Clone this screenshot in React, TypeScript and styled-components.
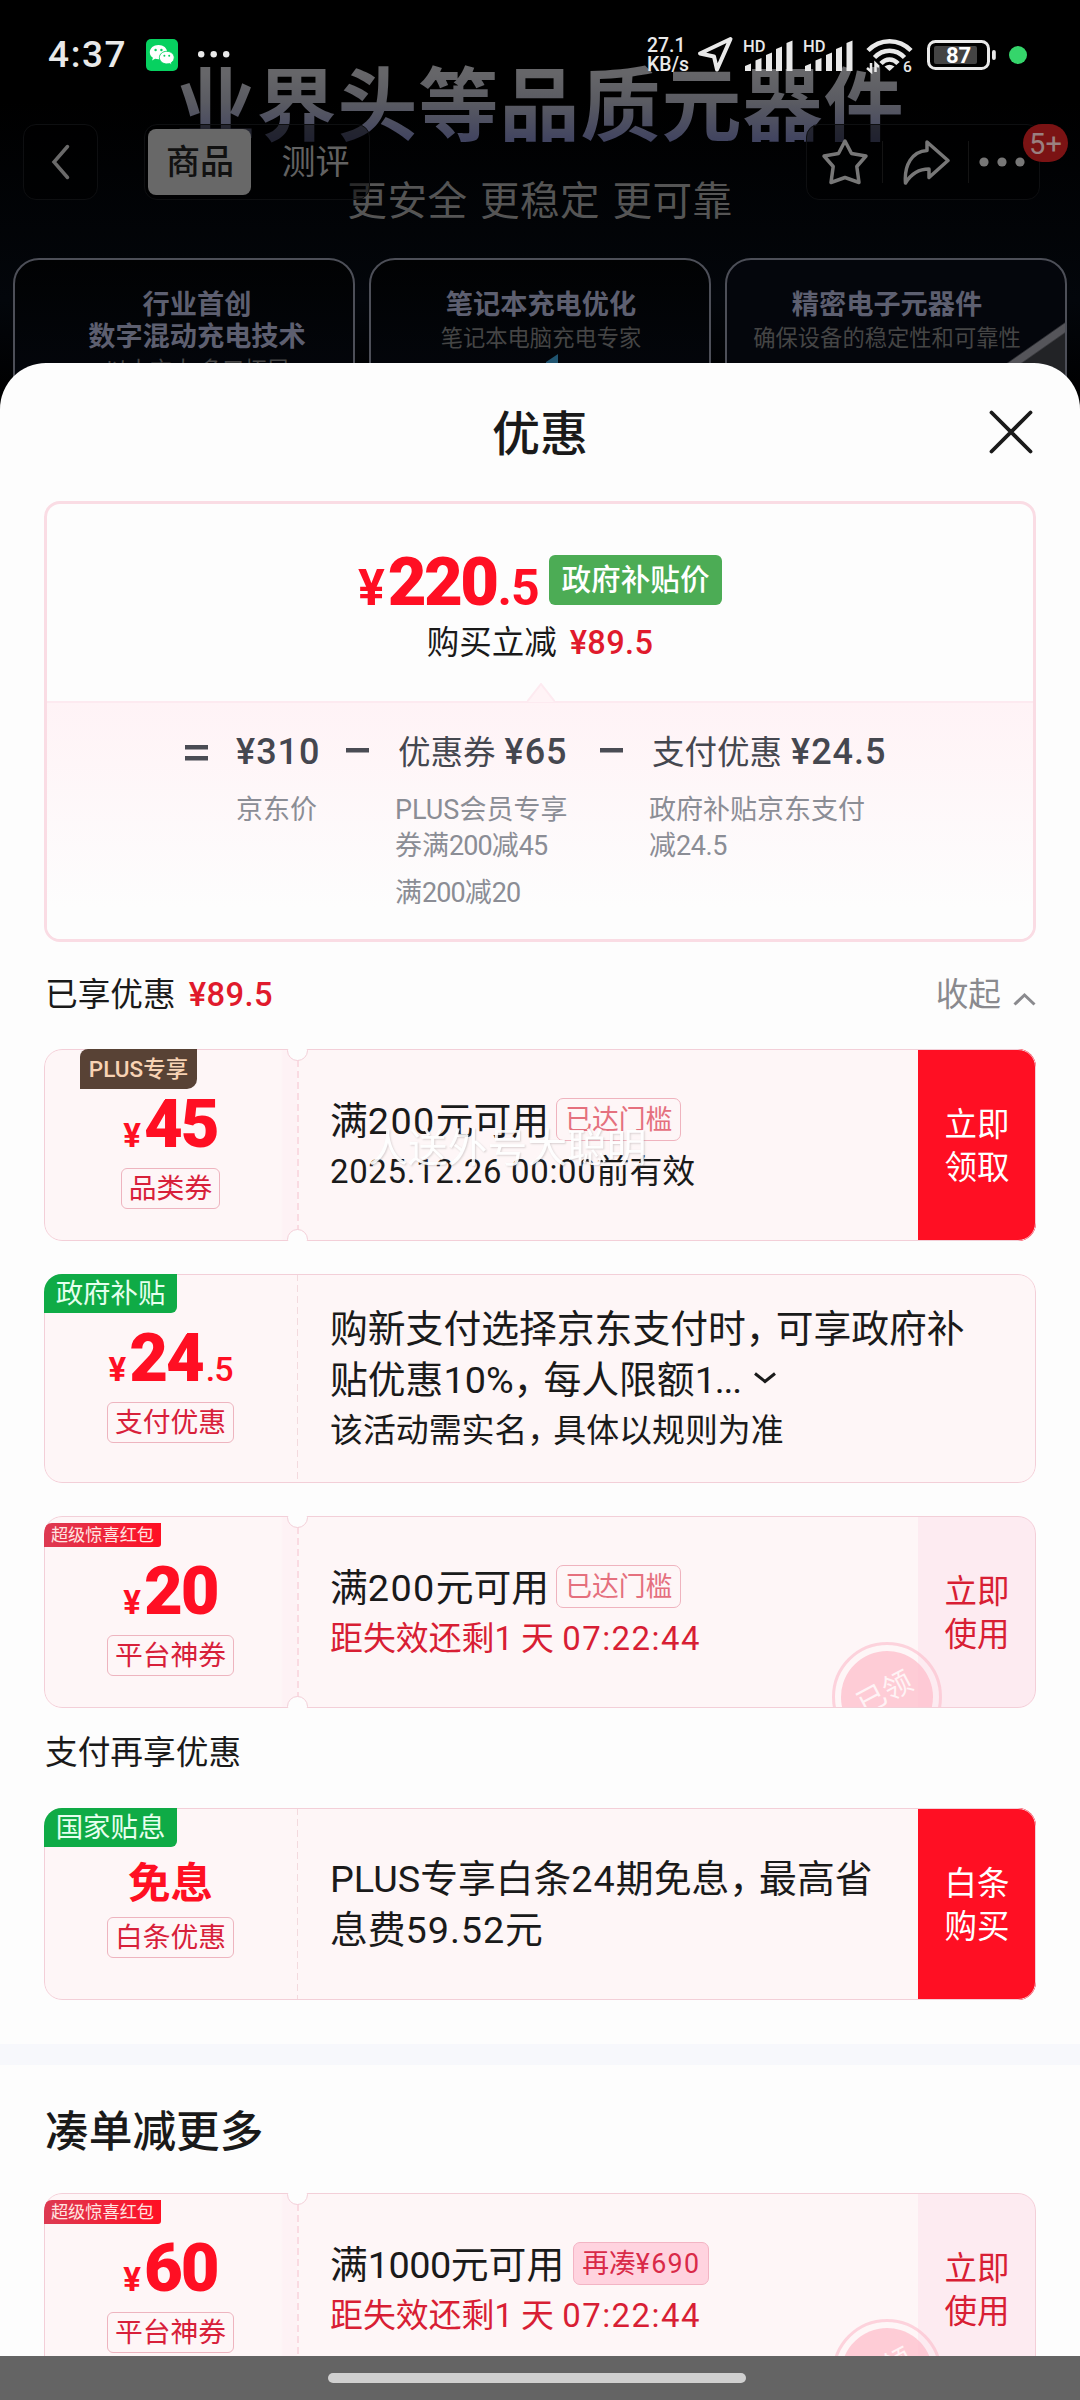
import React from "react";
import styled, { createGlobalStyle, css } from "styled-components";

const GlobalStyle = createGlobalStyle`
  * { box-sizing: border-box; }
  body {
    margin: 0;
    background: #000;
    font-family: Roboto, "Noto Sans CJK SC", sans-serif;
    color: #1a1a1a;
  }
`;

const Screen = styled.div`
  position: relative;
  width: 1080px;
  height: 2400px;
  overflow: hidden;
  background: linear-gradient(#000 0, #000 100px, #03060b 300px, #000 400px);
`;

/* Latin runs are set slightly looser or tighter than the Chinese text round them. */
const Num = styled.span<{ $ls: number }>`
  letter-spacing: ${(p) => p.$ls}px;
`;

/* Full-width comma with its trailing blank trimmed. */
const Comma = styled.span`
  letter-spacing: -0.21em;
`;

/* ---------- product poster behind the sheet ---------- */

const Poster = styled.div`
  position: absolute;
  inset: 0 0 auto 0;
  height: 420px;
  display: flex;
  flex-direction: column;
  align-items: center;
  padding-top: 59px;
`;

const PosterTitle = styled.div`
  font-size: 80px;
  line-height: 96px;
  letter-spacing: 1px;
  font-weight: 700;
  color: transparent;
  background: linear-gradient(#666669 15%, #5a5b62 45%, #3f4260 88%);
  background-clip: text;
  -webkit-background-clip: text;
`;

const PosterSub = styled.div`
  margin-top: 22px;
  font-size: 39.6px;
  line-height: 50px;
  letter-spacing: 0.5px;
  word-spacing: 2px;
  color: #555;
`;

const PosterCards = styled.div`
  display: flex;
  gap: 14px;
  margin-top: 31px;
`;

const PosterCard = styled.div<{ $shift?: number; $shine?: boolean }>`
  width: 342px;
  height: 160px;
  padding-top: 29px;
  border: 2px solid #4d4f58;
  border-radius: 26px;
  text-align: center;
  text-indent: ${(p) => (p.$shift ?? 0) * 2}px;
  white-space: nowrap;
  background: ${(p) =>
    p.$shine
      ? "linear-gradient(145deg, transparent 76%, #55555a 76.5%, #55555a 78.5%, #222326 79%), #04060c"
      : "linear-gradient(#010203, #04070e)"};
`;

const PosterCardTitle = styled.div`
  font-size: 27.2px;
  line-height: 32px;
  font-weight: 600;
  color: #5d5f70;
`;

const PosterCardNote = styled.div`
  font-size: 22.3px;
  line-height: 36px;
  margin-top: -1px;
  color: #454545;
`;

const CardGlint = styled.svg`
  display: inline-block;
  margin: -2px 0 0 24px;
`;

/* ---------- status bar and page navigation ---------- */

const Header = styled.header`
  position: relative;
  height: 363px;
`;

const StatusBar = styled.div`
  height: 108px;
  padding: 1px 53px 0 48px;
  display: flex;
  align-items: center;
  color: #e9e9e9;
`;

const Clock = styled.div`
  width: 98px;
  font-size: 37px;
  line-height: 40px;
  font-weight: 500;
  letter-spacing: 1.6px;
`;

const MoreDots = styled.svg`
  margin-left: 19px;
`;

const StatusIcons = styled.div`
  margin-left: auto;
  display: grid;
  grid-template-columns: 50px 46px 60px 63px 61px 82px 18px;
  align-items: center;
  svg {
    overflow: visible;
  }
`;

const Speed = styled.div`
  font-size: 19.4px;
  line-height: 19px;
  font-weight: 500;
`;

const CameraDot = styled.div`
  width: 18px;
  height: 18px;
  border-radius: 50%;
  background: #35d56b;
`;

const NavBar = styled.nav`
  display: flex;
  align-items: center;
  height: 76px;
  margin-top: 16px;
  padding: 0 40px 0 23px;
`;

const glass = css`
  height: 76px;
  border: 1px solid #0e0f11;
  border-radius: 13px;
  background: rgba(0, 0, 0, 0.5);
  display: flex;
  align-items: center;
`;

const BackButton = styled.div`
  ${glass}
  width: 75px;
  justify-content: center;
`;

const NavTabs = styled.div`
  ${glass}
  width: 226px;
  margin-left: 46px;
  padding-left: 3px;
`;

const NavTab = styled.div<{ $active?: boolean }>`
  width: ${(p) => (p.$active ? 103 : 118)}px;
  height: 66px;
  padding-left: ${(p) => (p.$active ? 1 : 11)}px;
  line-height: 67px;
  border-radius: 8px;
  text-align: center;
  font-size: 34px;
  font-weight: ${(p) => (p.$active ? 500 : 400)};
  color: ${(p) => (p.$active ? "#111" : "#626262")};
  background: ${(p) => (p.$active ? "#686868" : "transparent")};
`;

const NavActions = styled.div`
  ${glass}
  position: relative;
  width: 234px;
  margin-left: auto;
`;

const NavAction = styled.div<{ $w: number }>`
  width: ${(p) => p.$w}px;
  height: 42px;
  display: flex;
  align-items: center;
  justify-content: center;
  & + & {
    border-left: 1px solid #141414;
  }
`;

const CountBadge = styled.div`
  position: absolute;
  right: -29px;
  top: -1px;
  width: 45px;
  height: 38px;
  border-radius: 19px;
  background: #7b1314;
  color: #9a8080;
  font-size: 29px;
  line-height: 40px;
  text-align: center;
`;

/* ---------- bottom sheet ---------- */

const Sheet = styled.main`
  position: relative;
  height: 2037px;
  padding: 0 44px;
  border-radius: 46px 46px 0 0;
  background: #fdfdfd;
  overflow: hidden;
`;

const SheetHeader = styled.div`
  height: 138px;
  display: grid;
  grid-template-columns: 1fr auto 1fr;
  align-items: center;
`;

const SheetTitle = styled.h1`
  grid-column: 2;
  margin: 0;
  padding-top: 5px;
  font-size: 48px;
  line-height: 56px;
  font-weight: 500;
`;

const CloseIcon = styled.svg`
  justify-self: end;
  margin-right: 3px;
`;

const Summary = styled.section`
  height: 441px;
  border: 3px solid #fadce4;
  border-radius: 16px;
  overflow: hidden;
`;

const SummaryTop = styled.div`
  position: relative;
  height: 199px;
  padding-top: 51px;
  display: flex;
  flex-direction: column;
  align-items: center;
  border-bottom: 2px solid #fdeaf0;
`;

const Pointer = styled.svg`
  position: absolute;
  left: 480px;
  bottom: -2px;
`;

const FinalPriceRow = styled.div`
  display: flex;
  align-items: flex-end;
  height: 50px;
`;

const FinalPrice = styled.div`
  display: flex;
  align-items: baseline;
  width: 191px;
  height: 47px;
  line-height: 48px;
  font-weight: 700;
  font-size: 50px;
  letter-spacing: -1px;
  color: #ff0f23;
  b {
    margin: 0 1px 0 4px;
    font-size: 67px;
    letter-spacing: -2.6px;
  }
`;

const PriceBadge = styled.div`
  width: 173px;
  height: 50px;
  line-height: 51px;
  border-radius: 6px;
  background: #4cac55;
  color: #fff;
  font-size: 29.6px;
  font-weight: 500;
  text-align: center;
`;

const Amount = styled.span`
  color: #e01a2c;
  font-weight: 500;
  letter-spacing: 0.4px;
  margin-left: 13px;
`;

const SavingRow = styled.div`
  margin-top: 16px;
  font-size: 32.5px;
  line-height: 44px;
`;

const Equation = styled.div`
  display: flex;
  align-items: flex-start;
  height: 240px;
  padding: 27px 0 0 138px;
  background: linear-gradient(#fff3f6, #fdfdfd 85%);
`;

const Operator = styled.div<{ $w: number }>`
  width: ${(p) => p.$w}px;
  height: 44px;
  display: flex;
  align-items: center;
`;

const Term = styled.div<{ $w: number }>`
  width: ${(p) => p.$w}px;
`;

const TermHead = styled.div`
  font-size: 32.5px;
  line-height: 44px;
  color: #45474f;
  white-space: nowrap;
  span {
    font-size: 36px;
    font-weight: 500;
    letter-spacing: 1px;
  }
  em {
    font-style: normal;
    margin-right: 9px;
  }
`;

const TermNote = styled.div<{ $flush?: boolean }>`
  margin: 17px 0 0 ${(p) => (p.$flush ? 0 : -3)}px;
  font-size: 27px;
  line-height: 36px;
  color: #8b8d95;
  white-space: nowrap;
  & + & {
    margin-top: 11px;
  }
`;

const SectionRow = styled.div<{ $h: number; $pb: number }>`
  height: ${(p) => p.$h}px;
  padding: 0 0 ${(p) => p.$pb}px 1px;
  display: flex;
  align-items: center;
  font-size: 32.7px;
  line-height: 44px;
`;

const Collapse = styled.div`
  margin-left: auto;
  display: flex;
  align-items: center;
  gap: 12px;
  color: #8a8a8e;
  svg {
    margin-top: 9px;
  }
`;

const Band = styled.div`
  height: 21px;
  margin: 44px -44px 0;
  background: #f7f8fc;
`;

const MoreTitle = styled.h2`
  margin: 0;
  height: 128px;
  padding: 6px 0 0 1px;
  display: flex;
  align-items: center;
  font-size: 43.7px;
  line-height: 56px;
  font-weight: 500;
`;

/* ---------- coupon ticket ---------- */

const Ticket = styled.article<{ $h: number; $action: boolean }>`
  position: relative;
  display: grid;
  grid-template-columns: 253px 1fr ${(p) => (p.$action ? "118px" : "0")};
  height: ${(p) => p.$h}px;
  border-radius: 18px;
  background: #fef6f7;
  overflow: hidden;
  & + & {
    margin-top: 33px;
  }
  &::after {
    content: "";
    position: absolute;
    inset: 0;
    border: 1px solid #f3cfd8;
    border-radius: 18px;
    pointer-events: none;
  }
`;

const Stub = styled.div<{ $top: number; $notched?: boolean }>`
  display: flex;
  flex-direction: column;
  align-items: center;
  padding-top: ${(p) => p.$top}px;
  background: ${(p) =>
    p.$notched ? "linear-gradient(90deg, transparent 237px, #fef2f5 239px)" : "none"};
`;

const Perforation = styled.div<{ $strong?: boolean }>`
  position: absolute;
  left: 253px;
  top: 0;
  bottom: 0;
  width: ${(p) => (p.$strong ? 2 : 1)}px;
  background: repeating-linear-gradient(
    ${(p) => (p.$strong ? "#fadbe2" : "#f3dade")} 0 7px,
    transparent 7px 11px
  );
`;

const Notch = styled.div<{ $side: "top" | "bottom" }>`
  position: absolute;
  z-index: 1;
  left: 243px;
  ${(p) => p.$side}: -9px;
  width: 21px;
  height: 21px;
  border: 1px solid #f3cfd8;
  border-radius: 50%;
  background: #fdfdfd;
`;

const Price = styled.div<{ $wordy?: boolean }>`
  display: flex;
  align-items: baseline;
  height: ${(p) => (p.$wordy ? 38 : 48)}px;
  line-height: ${(p) => (p.$wordy ? 39 : 50)}px;
  font-size: ${(p) => (p.$wordy ? 42.5 : 33)}px;
  font-weight: 700;
  color: #ff0f23;
  b {
    margin-left: 3px;
    font-size: 67px;
    letter-spacing: -2px;
  }
  small {
    margin-left: 3px;
    font-size: 34px;
    font-weight: 500;
    letter-spacing: -1px;
  }
`;

const Kind = styled.div<{ $gap: number }>`
  margin-top: ${(p) => p.$gap}px;
  height: 41px;
  padding: 0 7px;
  border: 1px solid #eeb4bf;
  border-radius: 6px;
  font-size: 27.8px;
  line-height: 40px;
  color: #d8203a;
`;

const ribbons = {
  plus: css`
    left: 36px;
    top: 0;
    width: 117px;
    height: 40px;
    border-radius: 8px 0 10px 0;
    background: #584235;
    color: #f8d3b4;
    font-size: 22.5px;
    line-height: 40px;
    font-weight: 500;
  `,
  green: css`
    left: 0;
    top: 0;
    width: 133px;
    height: 39px;
    border-radius: 6px 0 6px 0;
    background: #0fab46;
    color: #e6ffee;
    font-size: 27.4px;
    line-height: 40px;
  `,
  red: css`
    left: 0;
    top: 7px;
    width: 117px;
    height: 24px;
    border-radius: 8px 0 3px 0;
    background: linear-gradient(90deg, #dd3a52, #ff0f23);
    color: #ffe4e0;
    font-size: 17.2px;
    line-height: 24px;
  `,
};

type RibbonTone = keyof typeof ribbons;

const Ribbon = styled.div<{ $tone: RibbonTone }>`
  position: absolute;
  z-index: 2;
  text-align: center;
  white-space: nowrap;
  ${(p) => ribbons[p.$tone]}
`;

const Body = styled.div`
  display: flex;
  flex-direction: column;
  justify-content: center;
  padding: 2px 0 0 33px;
  white-space: nowrap;
`;

const Title = styled.div`
  display: flex;
  align-items: center;
  height: 51px;
  font-size: 37.8px;
  line-height: 51px;
  svg {
    margin: 0 0 5px 12px;
  }
`;

const Sub = styled.div<{ $red?: boolean }>`
  font-size: 32.9px;
  line-height: 50px;
  color: ${(p) => (p.$red ? "#d81e34" : "inherit")};
`;

const Condition = styled.span<{ $filled?: boolean }>`
  height: 43px;
  margin: 0 0 3px ${(p) => (p.$filled ? 9 : 7)}px;
  padding: 0 8px;
  border: 1px solid ${(p) => (p.$filled ? "#f3b4c4" : "#efb3be")};
  border-radius: 7px;
  background: ${(p) => (p.$filled ? "#ffd3df" : "transparent")};
  color: ${(p) => (p.$filled ? "#d92a48" : "#e5707e")};
  font-size: 26.8px;
  line-height: 42px;
`;

const Action = styled.div<{ $solid?: boolean }>`
  display: flex;
  flex-direction: column;
  align-items: center;
  justify-content: center;
  padding-top: 4px;
  font-size: 32.5px;
  line-height: 43.5px;
  color: ${(p) => (p.$solid ? "#fff" : "#d81e34")};
  background: ${(p) => (p.$solid ? "#ff0f23" : "#fdebf1")};
`;

const Stamp = styled.div`
  position: absolute;
  left: 788px;
  top: 126px;
  width: 110px;
  height: 110px;
  padding: 6px;
  border: 3px solid rgba(251, 186, 201, 0.6);
  border-radius: 50%;
  span {
    display: block;
    height: 92px;
    border-radius: 50%;
    background: rgba(253, 190, 203, 0.75);
    color: #fff3f5;
    font-size: 29px;
    line-height: 82px;
    text-align: center;
    transform: rotate(-28deg);
  }
`;

const Watermark = styled.div`
  position: absolute;
  z-index: 3;
  left: 368px;
  top: 762px;
  font-size: 39.8px;
  line-height: 48px;
  color: #fff;
  text-shadow: 1px 1px 2px rgba(120, 110, 112, 0.3);
  opacity: 0.92;
`;

const HomeBar = styled.div`
  position: absolute;
  z-index: 5;
  inset: auto 0 0 0;
  height: 44px;
  display: flex;
  align-items: center;
  justify-content: center;
  background: #646464;
`;

const HomePill = styled.div`
  width: 418px;
  height: 10px;
  border-radius: 5px;
  margin-right: 6px;
  background: #d0d0d0;
`;

/* ---------- drawings ---------- */

const Signal = () => (
  <svg width="51" height="34" viewBox="0 0 51 34" fill="#e9e9e9">
    <text x="0" y="13.500" fontSize="16.500" fontWeight="500" fontFamily="Roboto, sans-serif">
      HD
    </text>
    <path d="M2 28 8 25.500V33H2zM12.500 22.500l6-2.500v13h-6zM23 17l6-2.500V33h-6zM33 11l6-2.500V33h-6zM43.500 5l6-2.500V33h-6z" />
  </svg>
);

const WeChat = () => (
  <svg width="32" height="32" viewBox="0 0 32 32">
    <rect width="32" height="32" rx="5" fill="#07d160" />
    <path
      d="M12.500 6C7.500 6 3.800 9.200 3.800 13.200c0 2.300 1.200 4.200 3.100 5.500l-.8 2.700 3-1.600c1 .3 2.200.5 3.400.5 5 0 8.700-3.100 8.700-7.100S17.500 6 12.500 6z"
      fill="#fff"
    />
    <path
      d="M20.800 12.300c-4.200 0-7.400 2.800-7.400 6.300s3.200 6.300 7.400 6.300c1 0 1.900-.1 2.700-.4l2.400 1.300-.6-2.200c1.800-1.100 2.900-2.900 2.900-5 0-3.500-3.200-6.300-7.400-6.300z"
      fill="#fff"
      stroke="#07d160"
      strokeWidth="0.9"
    />
    <g fill="#07d160">
      <circle cx="9.600" cy="11" r="1.200" />
      <circle cx="15.400" cy="11" r="1.200" />
      <circle cx="18.400" cy="16.700" r="1" />
      <circle cx="23.200" cy="16.700" r="1" />
    </g>
  </svg>
);

const Dots = ({ gap, r, fill }: { gap: number; r: number; fill: string }) => (
  <MoreDots width={gap * 2 + r * 2 + 2} height={r * 2 + 2} fill={fill}>
    {[0, 1, 2].map((i) => (
      <circle key={i} cx={r + 1 + i * gap} cy={r + 1} r={r} />
    ))}
  </MoreDots>
);

const Dash = ({ double }: { double?: boolean }) => (
  <svg width="24" height="20" fill="#4a4c54">
    {double ? (
      <>
        <rect x="0" y="3" width="23" height="4.500" />
        <rect x="0" y="14" width="23" height="4.500" />
      </>
    ) : (
      <rect x="0" y="6" width="23" height="4.500" />
    )}
  </svg>
);

/* ---------- data ---------- */

interface Coupon {
  height: number;
  top: number;
  ribbon: [RibbonTone, string];
  value?: [string, string?];
  word?: string;
  kind: string;
  title: React.ReactNode;
  sub?: React.ReactNode;
  subRed?: boolean;
  action?: [string, string];
  solid?: boolean;
  notched?: boolean;
  stamped?: boolean;
}

const enjoyed: Coupon[] = [
  {
    height: 192,
    top: 50,
    ribbon: ["plus", "PLUS专享"],
    value: ["45"],
    kind: "品类券",
    title: (
      <Title>
        满<Num $ls={1.4}>200</Num>元可用<Condition>已达门槛</Condition>
      </Title>
    ),
    sub: (
      <>
        <Num $ls={0.7}>2025.12.26 00:00</Num>前有效
      </>
    ),
    action: ["立即", "领取"],
    solid: true,
    notched: true,
  },
  {
    height: 209,
    top: 59,
    ribbon: ["green", "政府补贴"],
    value: ["24", ".5"],
    kind: "支付优惠",
    title: (
      <>
        <Title>
          购新支付选择京东支付时<Comma>，</Comma>可享政府补
        </Title>
        <Title>
          贴优惠10%<Comma>，</Comma>每人限额<Num $ls={-1.2}>1...</Num>
          <svg width="24" height="14" fill="none" stroke="#1a1a1a" strokeWidth="3">
            <path d="M2 2.500 12 10.500 22 2.500" />
          </svg>
        </Title>
      </>
    ),
    sub: (
      <>
        该活动需实名<Comma>，</Comma>具体以规则为准
      </>
    ),
  },
  {
    height: 192,
    top: 50,
    ribbon: ["red", "超级惊喜红包"],
    value: ["20"],
    kind: "平台神券",
    title: (
      <Title>
        满<Num $ls={1.4}>200</Num>元可用<Condition>已达门槛</Condition>
      </Title>
    ),
    sub: (
      <>
        距失效还剩1 天 <Num $ls={1.5}>07:22:44</Num>
      </>
    ),
    subRed: true,
    action: ["立即", "使用"],
    notched: true,
    stamped: true,
  },
];

const payment: Coupon = {
  height: 192,
  top: 56,
  ribbon: ["green", "国家贴息"],
  word: "免息",
  kind: "白条优惠",
  title: (
    <>
      <Title>
        PLUS专享白条<Num $ls={1}>24</Num>期免息<Comma>，</Comma>最高省
      </Title>
      <Title>
        息费<Num $ls={0.9}>59.52</Num>元
      </Title>
    </>
  ),
  action: ["白条", "购买"],
  solid: true,
};

const extra: Coupon = {
  ...enjoyed[2],
  value: ["60"],
  title: (
    <Title>
      满<Num $ls={-0.5}>1000</Num>元可用
      <Condition $filled>
        再凑<Num $ls={1.3}>¥690</Num>
      </Condition>
    </Title>
  ),
};

const CouponTicket = ({ c }: { c: Coupon }) => (
  <Ticket $h={c.height} $action={!!c.action}>
    <Stub $top={c.top} $notched={c.notched}>
      <Price $wordy={!!c.word}>
        {c.word}
        {c.value && (
          <>
            ¥<b>{c.value[0]}</b>
            {c.value[1] && <small>{c.value[1]}</small>}
          </>
        )}
      </Price>
      <Kind $gap={c.word ? 15 : 21}>{c.kind}</Kind>
    </Stub>
    <Body>
      {c.title}
      {c.sub && <Sub $red={c.subRed}>{c.sub}</Sub>}
    </Body>
    {c.action && (
      <Action $solid={c.solid}>
        <span>{c.action[0]}</span>
        <span>{c.action[1]}</span>
      </Action>
    )}
    <Ribbon $tone={c.ribbon[0]}>{c.ribbon[1]}</Ribbon>
    <Perforation $strong={c.notched} />
    {c.notched && (
      <>
        <Notch $side="top" />
        <Notch $side="bottom" />
      </>
    )}
    {c.stamped && (
      <Stamp>
        <span>已领</span>
      </Stamp>
    )}
  </Ticket>
);

export default function App() {
  return (
    <Screen>
      <GlobalStyle />
      <Poster>
        <PosterTitle>业界头等品质元器件</PosterTitle>
        <PosterSub>更安全 更稳定 更可靠</PosterSub>
        <PosterCards>
          <PosterCard $shift={13}>
            <PosterCardTitle>行业首创</PosterCardTitle>
            <PosterCardTitle>数字混动充电技术</PosterCardTitle>
            <PosterCardNote>以小充大 多口拓展</PosterCardNote>
          </PosterCard>
          <PosterCard $shift={1}>
            <PosterCardTitle>笔记本充电优化</PosterCardTitle>
            <PosterCardNote>笔记本电脑充电专家</PosterCardNote>
            <CardGlint width="12" height="18">
              <path d="M0 8 12 0V18H0z" fill="#1f5470" />
            </CardGlint>
          </PosterCard>
          <PosterCard $shift={-9} $shine>
            <PosterCardTitle>精密电子元器件</PosterCardTitle>
            <PosterCardNote>确保设备的稳定性和可靠性</PosterCardNote>
          </PosterCard>
        </PosterCards>
      </Poster>

      <Header>
        <StatusBar>
          <Clock>4:37</Clock>
          <WeChat />
          <Dots gap={12.5} r={3.2} fill="#e9e9e9" />
          <StatusIcons>
            <Speed>
              27.1
              <br />
              KB/s
            </Speed>
            <svg width="36" height="37" fill="none" stroke="#e9e9e9" strokeWidth="4" strokeLinejoin="round">
              <path d="M33.500 3 3 17.500 17 20.500 20 33.500z" />
            </svg>
            <Signal />
            <Signal />
            <svg width="47" height="36" viewBox="0 0 47 36" fill="none" stroke="#e9e9e9" strokeWidth="4.500">
              <path d="M2 13.500C14 1 33 1 45 13.500" />
              <path d="M8.500 20.500C17 11.500 30 11.500 38.500 20.500" />
              <path d="M15 26.500C20 21 27 21 32 26.500" />
              <path d="M23.500 34 18.500 29.500Q23.500 26 28.500 29.500z" fill="#e9e9e9" stroke="none" />
              <path d="M5 26v8.500L1 31M9.500 35v-8.500L13 30" strokeWidth="2.500" />
              <text
                x="37"
                y="35"
                fill="#e9e9e9"
                stroke="none"
                fontSize="15.500"
                fontWeight="500"
                fontFamily="Roboto, sans-serif"
              >
                6
              </text>
            </svg>
            <svg width="70" height="32" viewBox="0 0 70 32">
              <rect x="1.500" y="2.500" width="60" height="27" rx="7" fill="none" stroke="#e9e9e9" strokeWidth="3" />
              <rect x="7" y="7" width="43" height="18" rx="2" fill="#444" />
              <rect x="65" y="11" width="3.800" height="10" rx="1.900" fill="#e9e9e9" />
              <text
                x="31.500"
                y="24"
                textAnchor="middle"
                fontSize="22"
                fontWeight="700"
                fill="#fff"
                fontFamily="Roboto, sans-serif"
              >
                87
              </text>
            </svg>
            <CameraDot />
          </StatusIcons>
        </StatusBar>
        <NavBar>
          <BackButton>
            <svg width="24" height="38" fill="none" stroke="#6a6a6a" strokeWidth="3.500" strokeLinecap="round">
              <path d="M18.500 3.500 5 19 18.500 34.500" />
            </svg>
          </BackButton>
          <NavTabs>
            <NavTab $active>商品</NavTab>
            <NavTab>测评</NavTab>
          </NavTabs>
          <NavActions>
            <NavAction $w={75}>
              <svg width="48" height="48" fill="none" stroke="#777" strokeWidth="3.500" strokeLinejoin="round">
                <path d="M24 3 30.500 15.500 45 18 35.800 28.500 38 44.500 24 39.500 10 44.500 12.200 28.500 3 18 17.500 15.500z" />
              </svg>
            </NavAction>
            <NavAction $w={86}>
              <svg width="48" height="48" fill="none" stroke="#777" strokeWidth="3.500" strokeLinejoin="round">
                <path d="M3.500 45C2 27 10 13.500 25 12.500V4L46 22.500 27 39.500V31C17 31 9 36 3.500 45z" />
              </svg>
            </NavAction>
            <NavAction $w={67}>
              <svg width="46" height="10" fill="#777">
                <circle cx="5" cy="5" r="4.600" />
                <circle cx="23" cy="5" r="4.600" />
                <circle cx="41" cy="5" r="4.600" />
              </svg>
            </NavAction>
            <CountBadge>5+</CountBadge>
          </NavActions>
        </NavBar>
      </Header>

      <Sheet>
        <SheetHeader>
          <SheetTitle>优惠</SheetTitle>
          <CloseIcon width="44" height="44" fill="none" stroke="#1a1a1a" strokeWidth="3.800" strokeLinecap="round">
            <path d="M2.500 2.500 41.500 41.500M41.500 2.500 2.500 41.500" />
          </CloseIcon>
        </SheetHeader>

        <Summary>
          <SummaryTop>
            <FinalPriceRow>
              <FinalPrice>
                ¥<b>220</b>.5
              </FinalPrice>
              <PriceBadge>政府补贴价</PriceBadge>
            </FinalPriceRow>
            <SavingRow>
              购买立减<Amount>¥89.5</Amount>
            </SavingRow>
            <Pointer width="28" height="20">
              <path d="M0 19 14 1 28 19" fill="#fff3f6" stroke="#fdeaf0" strokeWidth="2" />
            </Pointer>
          </SummaryTop>
          <Equation>
            <Operator $w={51}>
              <Dash double />
            </Operator>
            <Term $w={110}>
              <TermHead>
                <span>¥310</span>
              </TermHead>
              <TermNote $flush>京东价</TermNote>
            </Term>
            <Operator $w={52}>
              <Dash />
            </Operator>
            <Term $w={202}>
              <TermHead>
                <em>优惠券</em>
                <span>¥65</span>
              </TermHead>
              <TermNote>
                PLUS会员专享
                <br />
                券满<Num $ls={-0.9}>200</Num>减<Num $ls={-0.9}>45</Num>
              </TermNote>
              <TermNote>
                满<Num $ls={-0.9}>200</Num>减<Num $ls={-0.9}>20</Num>
              </TermNote>
            </Term>
            <Operator $w={52}>
              <Dash />
            </Operator>
            <Term $w={260}>
              <TermHead>
                <em>支付优惠</em>
                <span>¥24.5</span>
              </TermHead>
              <TermNote>
                政府补贴京东支付
                <br />
                减<Num $ls={-0.4}>24.5</Num>
              </TermNote>
            </Term>
          </Equation>
        </Summary>

        <SectionRow $h={107} $pb={2}>
          已享优惠<Amount>¥89.5</Amount>
          <Collapse>
            收起
            <svg width="23" height="15" fill="none" stroke="#8a8a8e" strokeWidth="3">
              <path d="M1.500 12.500 11.500 3 21.500 12.500" />
            </svg>
          </Collapse>
        </SectionRow>
        {enjoyed.map((c) => (
          <CouponTicket key={c.kind} c={c} />
        ))}
        <SectionRow $h={100} $pb={10}>
          支付再享优惠
        </SectionRow>
        <CouponTicket c={payment} />
        <Band />
        <MoreTitle>凑单减更多</MoreTitle>
        <CouponTicket c={extra} />
        <Watermark>人送外号大聪明</Watermark>
      </Sheet>

      <HomeBar>
        <HomePill />
      </HomeBar>
    </Screen>
  );
}
